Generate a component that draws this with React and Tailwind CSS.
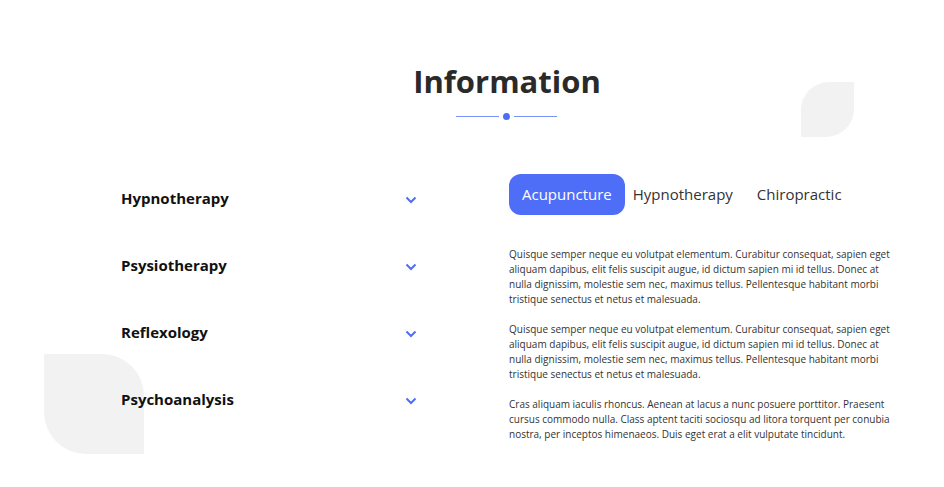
import React from "react";

const P1 =
  "Quisque semper neque eu volutpat elementum. Curabitur consequat, sapien eget aliquam dapibus, elit felis suscipit augue, id dictum sapien mi id tellus. Donec at nulla dignissim, molestie sem nec, maximus tellus. Pellentesque habitant morbi tristique senectus et netus et malesuada.";
const P3 =
  "Cras aliquam iaculis rhoncus. Aenean at lacus a nunc posuere porttitor. Praesent cursus commodo nulla. Class aptent taciti sociosqu ad litora torquent per conubia nostra, per inceptos himenaeos. Duis eget erat a elit vulputate tincidunt.";

function Chevron() {
  return (
    <svg width="12" height="8" viewBox="0 0 12 8" fill="none">
      <polyline points="1.5,1.5 6,6 10.5,1.5" stroke="#4f6ef7" strokeWidth="2" />
    </svg>
  );
}

export default function App() {
  const items = ["Hypnotherapy", "Psysiotherapy", "Reflexology", "Psychoanalysis"];
  return (
    <div
      className="relative w-[944px] h-[487px] bg-white overflow-hidden"
      style={{ fontFamily: '"Open Sans", sans-serif' }}
    >
      <div className="absolute left-[801px] top-[82px] w-[53px] h-[55px] bg-[#f2f2f2] rounded-tl-[28px] rounded-br-[28px]" />
      <div className="absolute left-[44px] top-[354px] w-[100px] h-[100px] bg-[#f2f2f2] rounded-tr-[42px] rounded-bl-[42px]" />

      <div className="relative ml-[121px] w-[774px] pt-[59px]">
        <h2 className="text-center text-[31px] leading-[44px] font-bold text-[#2a2a2a] pr-[2px]">Information</h2>
        <div className="flex items-center justify-center mt-[10px] gap-[4px] pr-[4px]">
          <div className="w-[43px] h-[1.5px] bg-[#7b93f8]" />
          <div className="w-[7px] h-[7px] rounded-full bg-[#4f6ef7]" />
          <div className="w-[43px] h-[1.5px] bg-[#7b93f8]" />
        </div>

        <div className="flex mt-[54px]">
          <div className="w-[296px] pt-[13px]">
            {items.map((t) => (
              <div key={t} className="flex justify-between h-[67px] items-start">
                <span className="text-[15px] leading-[22px] font-bold text-[#111]">{t}</span>
                <span className="pt-[9px]"><Chevron /></span>
              </div>
            ))}
          </div>
          <div className="ml-[92px] flex-1">
            <div className="flex items-center">
              <div className="h-[41px] px-[13px] flex items-center rounded-[12px] bg-[#4f6ef7] text-white text-[15px]">Acupuncture</div>
              <div className="px-[8px] text-[15px] text-[#333]">Hypnotherapy</div>
              <div className="px-[16px] text-[15px] text-[#333]">Chiropractic</div>
            </div>
            <div className="mt-[32px] text-[10px] leading-[15px] text-[#333]">
              <p>{P1}</p>
              <p className="mt-[15px]">{P1}</p>
              <p className="mt-[15px]">{P3}</p>
            </div>
          </div>
        </div>
      </div>
    </div>
  );
}
